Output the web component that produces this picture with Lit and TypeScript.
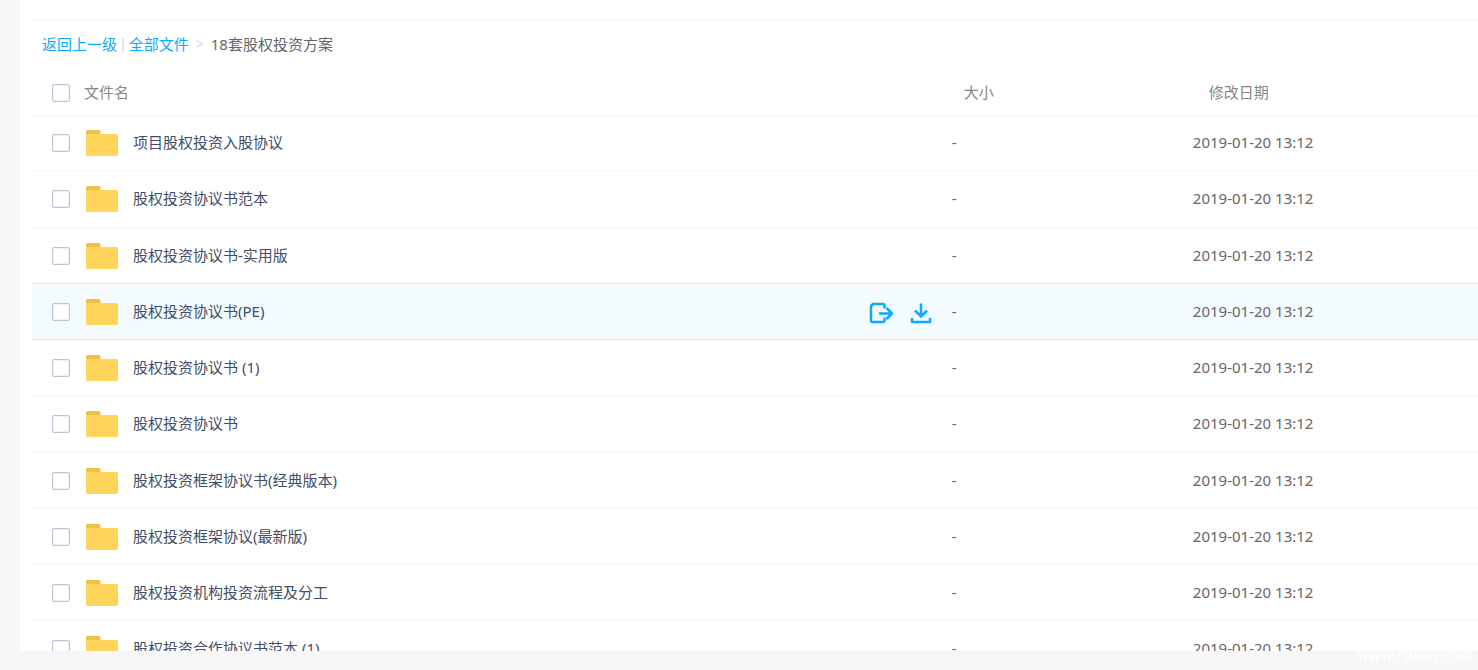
import { LitElement, html, css, svg } from "lit";
import { customElement, property, state } from "lit/decorators.js";
import { classMap } from "lit/directives/class-map.js";

interface FileEntry {
  name: string;
  size: string;
  modified: string;
}

const MODIFIED = "2019-01-20 13:12";

const FILES: FileEntry[] = [
  "项目股权投资入股协议",
  "股权投资协议书范本",
  "股权投资协议书-实用版",
  "股权投资协议书(PE)",
  "股权投资协议书 (1)",
  "股权投资协议书",
  "股权投资框架协议书(经典版本)",
  "股权投资框架协议(最新版)",
  "股权投资机构投资流程及分工",
  "股权投资合作协议书范本 (1)",
].map((name) => ({ name, size: "-", modified: MODIFIED }));

const SHAPES = {
  share: svg`<path d="M15.500 6.500V3.500Q15.500 2 14 2H4L2 4V18.500Q2 20 3.500 20H14Q15.500 20 15.500 18.500V15.500" />
    <path d="M10 11.500H22.500M17.500 6L23 11.500L17.500 17" />`,
  download: svg`<path d="M12 1.500V14M6 8.500L12 14.500L18 8.500" />
    <path d="M3 16V20H21V16" />`,
};

@customElement("action-icon")
export class ActionIcon extends LitElement {
  @property() name: keyof typeof SHAPES = "share";

  static styles = css`
    :host {
      display: block;
    }
    .icon {
      display: block;
      width: 24px;
      height: 22px;
      fill: none;
      stroke: #09aaff;
      stroke-width: 2.5;
      stroke-linejoin: round;
    }
  `;

  render() {
    return html`<svg class="icon" viewBox="0 0 24 22" aria-hidden="true">${SHAPES[this.name]}</svg>`;
  }
}

@customElement("folder-icon")
export class FolderIcon extends LitElement {
  static styles = css`
    :host {
      display: block;
    }
    .icon {
      display: block;
      width: 32px;
      height: 26px;
    }
  `;

  render() {
    return html`<svg class="icon" viewBox="0 0 32 26" aria-hidden="true">
      <path fill="#eec04c" d="M0 6V1.500Q0 0 1.500 0H13Q14.500 0 14.500 1.500V6Z" />
      <path fill="#ffd65b" d="M0 4H30.500Q32 4 32 5.500V24.500Q32 26 30.500 26H1.500Q0 26 0 24.500Z" />
    </svg>`;
  }
}

@customElement("app-root")
export class AppRoot extends LitElement {
  @state() private active = 3;

  static styles = css`
    :host {
      display: flex;
      flex-direction: column;
      box-sizing: border-box;
      height: 100vh;
      padding: 0 0 19px 20px;
      position: relative;
      overflow: hidden;
      background: #f7f7f7;
      color: #666;
      font: 15px/20px "Noto Sans", "Noto Sans CJK SC", sans-serif;
    }
    .panel {
      flex: 1;
      min-height: 0;
      overflow: hidden;
      padding: 19px 0 0 12px;
      background: #fff;
    }
    .crumbs {
      display: flex;
      align-items: center;
      box-sizing: border-box;
      height: 51px;
      padding: 0 0 2px 10px;
      border-top: 1px solid #f5f5f7;
    }
    .crumbs a {
      color: #09aaff;
      text-decoration: none;
    }
    .bar,
    .arrow {
      color: #c4dbfe;
      font-size: 14px;
    }
    .bar {
      padding: 0 2px;
    }
    .arrow {
      padding: 0 7px;
    }
    .files {
      width: 100%;
      table-layout: fixed;
      border-spacing: 0;
    }
    .col-size,
    .col-date {
      width: 16.67%;
    }
    .col-rest {
      width: 3.05%;
    }
    th,
    td {
      box-sizing: border-box;
      height: 56px;
      padding: 0 0 2px;
      border-bottom: 1px solid #f2f6fd;
      text-align: left;
      font-weight: 400;
      white-space: nowrap;
    }
    tbody tr:first-child td {
      height: 55px;
    }
    tbody tr:nth-child(4n + 2) td {
      height: 57px;
    }
    th {
      height: 46px;
      color: #888;
      border-color: #f4f5f8;
    }
    th.size {
      padding-left: 12px;
    }
    th.date {
      padding-left: 16px;
    }
    th.title,
    td.title {
      padding: 0;
    }
    .cell {
      display: flex;
      align-items: center;
      padding-left: 20px;
    }
    .check {
      appearance: none;
      box-sizing: border-box;
      width: 18px;
      height: 18px;
      margin: 0;
      border: 1px solid #bcc5d3;
      border-radius: 2px;
      background: #fff;
      box-shadow: inset 0 0 0 1px #eef1f6;
    }
    .check:checked {
      background: #09aaff;
    }
    .heading {
      padding: 0 0 2px 14px;
    }
    .folder {
      margin: 0 15px 0 16px;
    }
    .name {
      flex: 1;
      padding-bottom: 2px;
      color: #424e67;
    }
    .actions {
      display: flex;
      gap: 16px;
      padding: 2px 19px 0 0;
    }
    .actions button {
      padding: 0;
      border: 0;
      background: none;
      cursor: pointer;
    }
    .above-active td,
    .active td {
      border-color: #d2ebf8;
    }
    .active td {
      background: #f3fbff;
    }
    .watermark {
      position: absolute;
      right: 5px;
      bottom: 5px;
      color: #fff;
      font: italic 18px/20px "Liberation Serif", serif;
    }
  `;

  private row(file: FileEntry, i: number) {
    const active = i === this.active;
    const id = `file-${i}`;
    return html`<tr
      class=${classMap({ active, "above-active": i === this.active - 1 })}
      @mouseenter=${() => (this.active = i)}
    >
      <td class="title">
        <div class="cell">
          <input class="check" type="checkbox" id=${id} />
          <folder-icon class="folder"></folder-icon>
          <label class="name" for=${id}>${file.name}</label>
          ${active
            ? html`<div class="actions">
                <button type="button" aria-label="分享"><action-icon name="share"></action-icon></button>
                <button type="button" aria-label="下载"><action-icon name="download"></action-icon></button>
              </div>`
            : null}
        </div>
      </td>
      <td>${file.size}</td>
      <td>${file.modified}</td>
      <td></td>
    </tr>`;
  }

  render() {
    return html`
      <main class="panel">
        <nav class="crumbs">
          <a href="#up">返回上一级</a><span class="bar">|</span><a href="#all">全部文件</a
          ><span class="arrow">&gt;</span><span>18套股权投资方案</span>
        </nav>
        <table class="files">
          <colgroup>
            <col />
            <col class="col-size" />
            <col class="col-date" />
            <col class="col-rest" />
          </colgroup>
          <thead>
            <tr>
              <th class="title">
                <div class="cell">
                  <input class="check" type="checkbox" id="all" />
                  <label class="heading" for="all">文件名</label>
                </div>
              </th>
              <th class="size">大小</th>
              <th class="date">修改日期</th>
              <th></th>
            </tr>
          </thead>
          <tbody>
            ${FILES.map((file, i) => this.row(file, i))}
          </tbody>
        </table>
      </main>
      <div class="watermark">www.ruikei.com</div>
    `;
  }
}
